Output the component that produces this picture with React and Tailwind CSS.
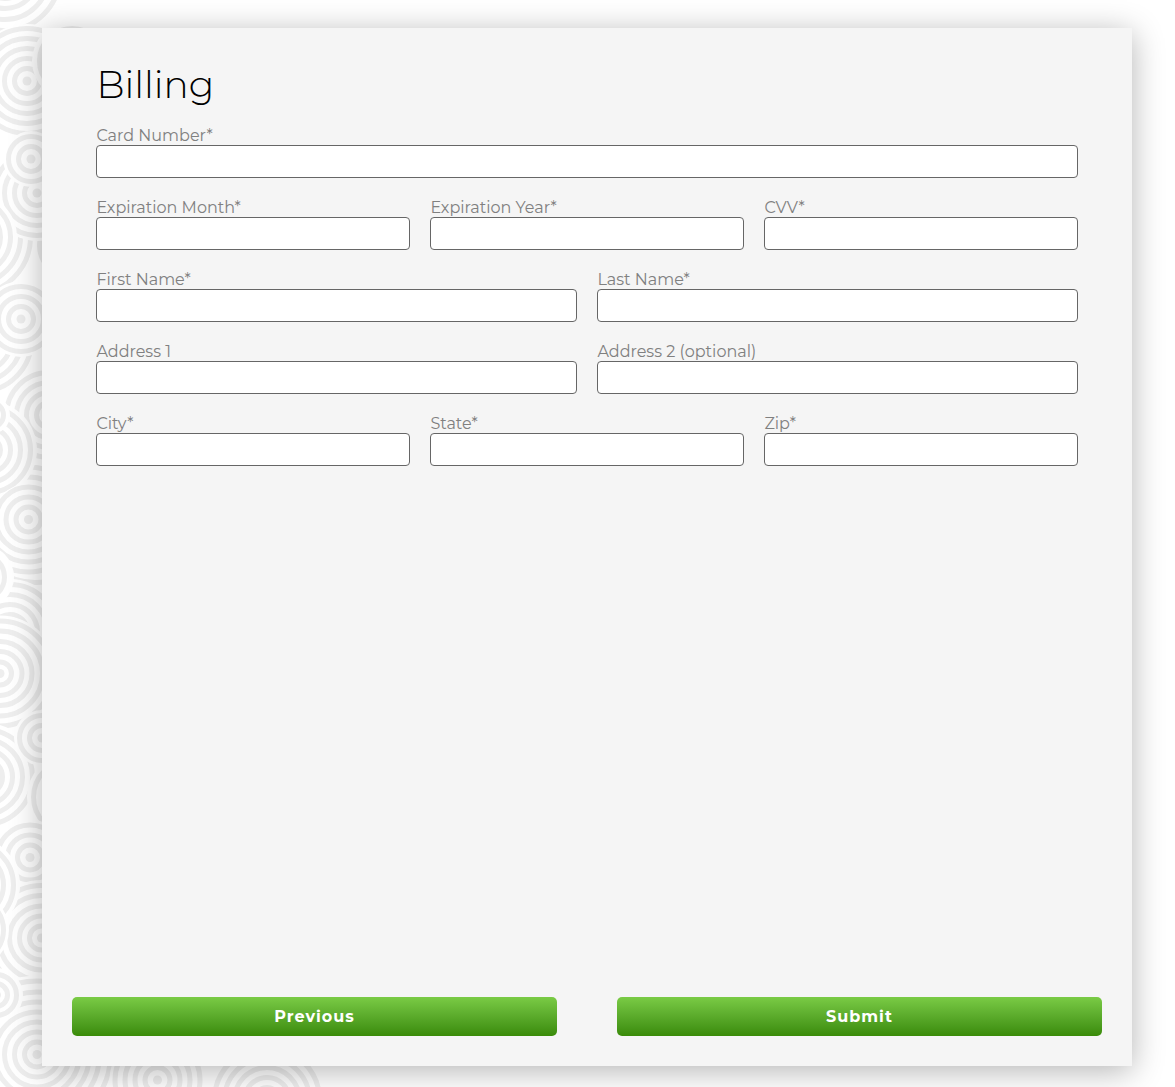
import React from "react";

// Overlapping ring motifs, painted back to front: [cx, cy, backing radius, ring outer radii]
const discs = [
  [35, 520, 88, [65, 75, 85]],
  [-20, 340, 68, [34, 44, 54]],
  [49, 415, 48, [15, 25, 35, 45]],
  [-27, 237, 63, [30, 40, 50, 60]],
  [72, 245, 38, [35]],
  [37, 193, 48, [4.5, 15, 25, 35, 45]],
  [-27, 237, 44, [30, 40]],
  [5, -24, 60, [25, 35, 46, 57]],
  [27, 81, 57, [4.5, 15, 25, 35, 45, 55]],
  [72, 61, 40, [35]],
  [31, 159, 28, [4.5, 15, 25]],
  [21, 319, 38, [4.5, 15, 25, 35]],
  [28.5, 519.5, 58, [45, 55]],
  [-12, 450, 49, [15, 25, 35, 45]],
  [-9, 415, 19, [15]],
  [28.5, 519.5, 36, [4.5, 15, 25, 35]],
  [10, 632, 53, [20, 30, 40, 50]],
  [-18, 577, 32, [15, 25]],
  [0, 673.5, 58, [4.5, 14, 24.5, 34.5, 45, 55]],
  [-15, 777, 54, [20, 30, 40, 50]],
  [42, 738, 28, [4.5, 15, 25]],
  [70, 797, 43, [39]],
  [30, 857.5, 38, [4.5, 15, 25, 35]],
  [41.5, 938, 58, [45, 55]],
  [-29, 885, 49, [25, 35, 45]],
  [41.5, 938, 36, [4.5, 14.5, 24.5, 34.5]],
  [-29, 930, 38, [25, 35]],
  [37, 1054.5, 79, [4.5, 15, 25, 35, 45, 55, 65, 76]],
  [-4, 995, 27, [5, 14, 23]],
  [267, 1100, 58, [15, 25, 35, 45, 55]],
  [157.5, 1080, 48, [4.5, 15, 25, 35, 45]],
];

function Backdrop() {
  return (
    <svg className="absolute inset-0 h-full w-full" aria-hidden="true">
      {discs.map(([cx, cy, r, rings], i) => (
        <g key={i}>
          <circle cx={cx} cy={cy} r={r} fill="#fff" />
          {rings.map((o) =>
            o <= 5 ? (
              <circle key={o} cx={cx} cy={cy} r={o} fill="#eeeeee" />
            ) : (
              <circle key={o} cx={cx} cy={cy} r={o - 2.5} fill="none" stroke="#eeeeee" strokeWidth="5" />
            )
          )}
        </g>
      ))}
    </svg>
  );
}

const rows = [
  ["Card Number*"],
  ["Expiration Month*", "Expiration Year*", "CVV*"],
  ["First Name*", "Last Name*"],
  ["Address 1", "Address 2 (optional)"],
  ["City*", "State*", "Zip*"],
];

function Field({ label }) {
  return (
    <label className="block min-w-0 flex-1">
      <span className="block h-5 pl-[0.4px] text-[16px] leading-[22px] font-normal whitespace-nowrap text-[#808080]">{label}</span>
      <input type="text" className="block h-[33px] w-full rounded-[4px] border border-[#666] bg-white px-2 outline-none" />
    </label>
  );
}

function Button({ children }) {
  return (
    <button
      type="button"
      className="h-[39px] flex-1 rounded-[5px] bg-linear-to-b from-[#7acb45] to-[#3a8b08] text-[16px] leading-5 font-bold tracking-[1px] text-white"
    >
      {children}
    </button>
  );
}

export default function App() {
  return (
    <div className="relative h-[1087px] overflow-hidden bg-white pt-7 pl-[42px] font-['Montserrat',Inter,sans-serif]">
      <Backdrop />
      <main className="relative flex h-[1038px] w-[1090px] flex-col bg-[#f5f5f5] px-[30px] pb-[30px] shadow-[0_5px_30px_rgba(0,0,0,0.3)]">
        <form className="flex flex-1 flex-col px-6 pt-8">
          <h1 className="h-[65px] pl-[0.5px] text-[37.33px] leading-[50px] font-[350] text-black">Billing</h1>
          <div className="flex flex-col gap-[19px]">
            {rows.map((row, i) => (
              <div key={i} className="flex gap-5">
                {row.map((label) => (
                  <Field key={label} label={label} />
                ))}
              </div>
            ))}
          </div>
        </form>
        <div className="flex gap-[60px]">
          <Button>Previous</Button>
          <Button>Submit</Button>
        </div>
      </main>
    </div>
  );
}
